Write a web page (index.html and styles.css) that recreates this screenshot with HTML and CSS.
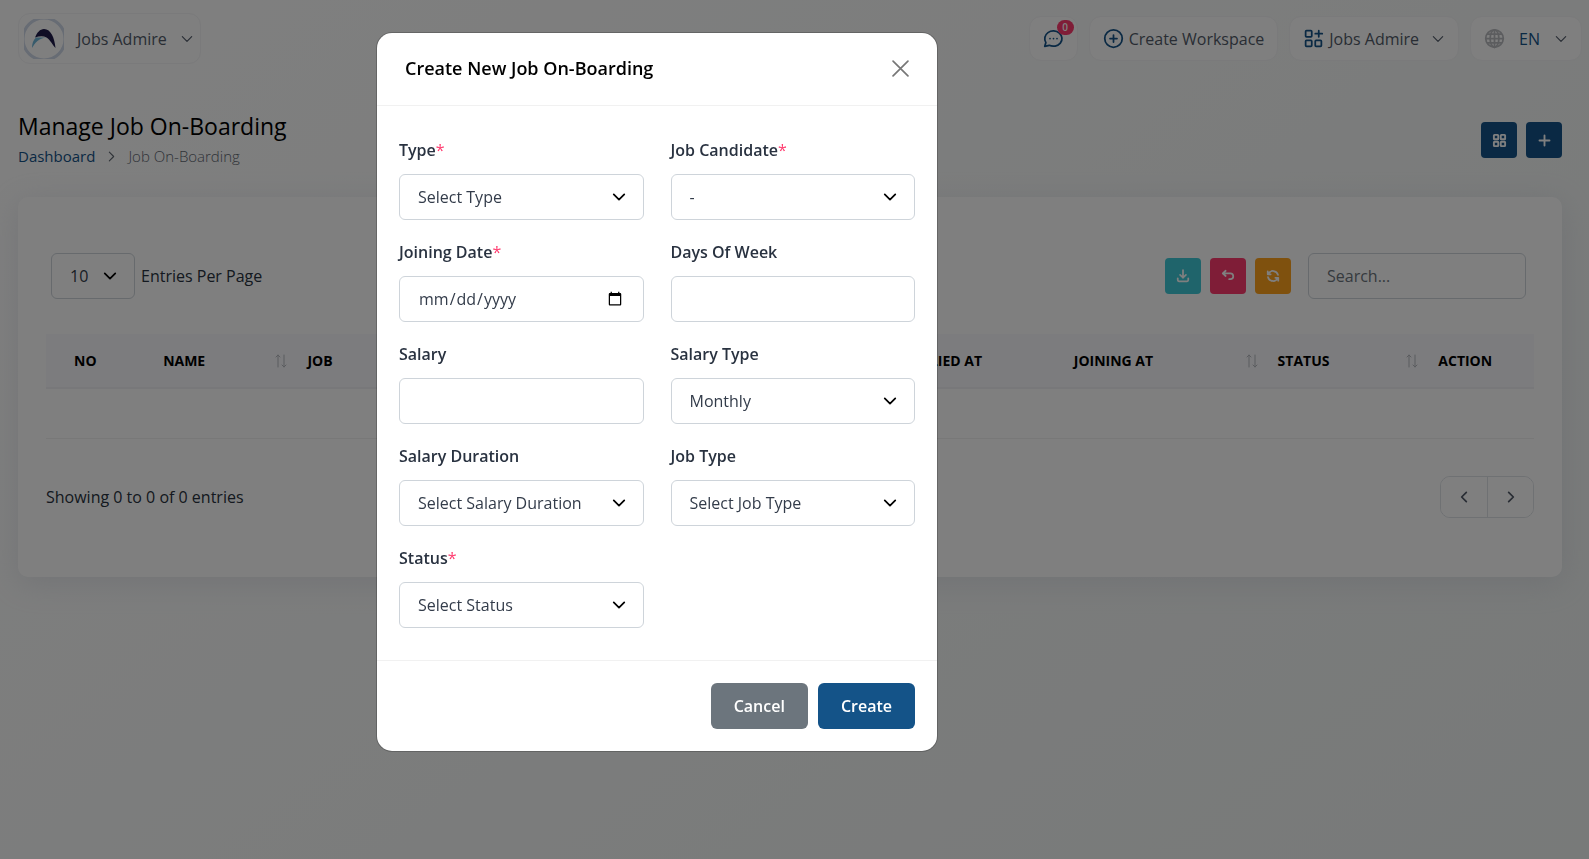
FILE: index.html
```html
<!DOCTYPE html>
<html lang="en">
<head>
<meta charset="utf-8">
<meta name="viewport" content="width=device-width, initial-scale=1">
<title>Manage Job On-Boarding</title>
<link rel="stylesheet" href="styles.css">
</head>
<body>
<svg class="defs" aria-hidden="true">
  <symbol id="chev" viewBox="0 0 24 24"><path d="M4 8l8 8 8-8"/></symbol>
  <symbol id="sort" viewBox="0 0 12 14"><path d="M3 13V1M1 3l2-2 2 2M9 1v12M7 11l2 2 2-2"/></symbol>
</svg>

<header class="topbar">
  <button class="pill profile" type="button">
    <svg class="avatar" viewBox="0 0 40 40">
      <circle cx="20" cy="20" r="21" fill="#fff" stroke="#cfd8e8" stroke-width="3"/>
      <path d="M8 29c0-4 1-8 4-10.500h10C15 19 11 24 8 29z" fill="#6fb6d8"/>
      <path d="M11 18.500c2-5 5-8.500 9-8.500 7 0 10.500 9 11.500 19-3-3-5-8-9-10.500-3-1.600-7-1.500-11.500 0z" fill="#1e1a4b"/>
    </svg>
    <span>Jobs Admire</span>
    <svg class="chev"><use href="#chev"/></svg>
  </button>
  <nav class="tools">
    <button class="pill chat" type="button" aria-label="Messages">
      <svg class="ico" viewBox="0 0 24 24"><path d="M2 21l1.300-4.300C0.900 13 1.900 8 5.700 5.300c3.900-2.700 9.400-2.500 13 .600 3.500 3 4 8 1.100 11.400-2.900 3.500-8.400 4.500-12.700 2.500L2 21M12 12v.01M8 12v.01M16 12v.01"/></svg>
      <span class="badge">0</span>
    </button>
    <button class="pill" type="button">
      <svg class="ico" viewBox="0 0 24 24"><circle cx="12" cy="12" r="10"/><path d="M8 12h8M12 8v8"/></svg>
      <span>Create Workspace</span>
    </button>
    <button class="pill" type="button">
      <svg class="ico" viewBox="0 0 24 24"><rect x="3" y="3" width="7" height="7" rx="1"/><rect x="3" y="14" width="7" height="7" rx="1"/><rect x="14" y="14" width="7" height="7" rx="1"/><path d="M14 6.500h8M18 3v7"/></svg>
      <span>Jobs Admire</span>
      <svg class="chev"><use href="#chev"/></svg>
    </button>
    <button class="pill lang" type="button">
      <svg class="globe" viewBox="0 0 24 24"><circle cx="12" cy="12" r="10"/><ellipse cx="12" cy="12" rx="5" ry="10"/><path d="M2 12h20M12 2v20M4 7h16M4 17h16"/></svg>
      <span>EN</span>
      <svg class="chev"><use href="#chev"/></svg>
    </button>
  </nav>
</header>

<main class="page">
  <div class="page-head">
    <div>
      <h1>Manage Job On-Boarding</h1>
      <nav class="crumbs">
        <a href="#">Dashboard</a>
        <svg class="crumb-sep"><use href="#chev"/></svg>
        <span>Job On-Boarding</span>
      </nav>
    </div>
    <div class="head-actions">
      <button class="sq-btn" type="button" aria-label="Grid view"><svg viewBox="0 0 24 24"><rect x="3" y="3" width="7" height="7" rx="1"/><rect x="14" y="3" width="7" height="7" rx="1"/><rect x="3" y="14" width="7" height="7" rx="1"/><rect x="14" y="14" width="7" height="7" rx="1"/></svg></button>
      <button class="sq-btn" type="button" aria-label="Create"><svg viewBox="0 0 24 24"><path d="M12 4v16M4 12h16"/></svg></button>
    </div>
  </div>

  <section class="card">
    <div class="toolbar">
      <div class="entries">
        <select id="per" class="control"><option>10</option></select>
        <label for="per">Entries Per Page</label>
      </div>
      <div class="filters">
        <button class="sq-btn teal" type="button" aria-label="Export"><svg viewBox="0 0 24 24"><path d="M3 16v3a2 2 0 0 0 2 2h14a2 2 0 0 0 2-2v-3M7 10l5 5 5-5M12 2v13"/></svg></button>
        <button class="sq-btn pink" type="button" aria-label="Reset"><svg viewBox="0 0 24 24"><path d="M8 12L3 7.500 8 3M3 7.500h13a5 5 0 0 1 0 10h-2"/></svg></button>
        <button class="sq-btn amber" type="button" aria-label="Reload"><svg viewBox="0 0 24 24"><path d="M20.500 10A9 9 0 0 0 4 8M3 4v5h5M3.500 14A9 9 0 0 0 20 16M21 20v-5h-5"/></svg></button>
        <input class="control search" type="search" placeholder="Search..." aria-label="Search">
      </div>
    </div>
    <table>
      <colgroup><col class="c-no"><col class="c-name"><col class="c-job"><col class="c-app"><col class="c-join"><col class="c-stat"><col class="c-act"></colgroup>
      <thead>
        <tr>
          <th>No</th>
          <th><span class="th">Name <svg><use href="#sort"/></svg></span></th>
          <th>Job</th>
          <th>Applied At</th>
          <th><span class="th">Joining At <svg><use href="#sort"/></svg></span></th>
          <th><span class="th">Status <svg><use href="#sort"/></svg></span></th>
          <th>Action</th>
        </tr>
      </thead>
      <tbody><tr><td colspan="7"></td></tr></tbody>
    </table>
    <div class="table-foot">
      <span>Showing 0 to 0 of 0 entries</span>
      <div class="pager">
        <button type="button" aria-label="Previous"><svg class="prev"><use href="#chev"/></svg></button>
        <button type="button" aria-label="Next"><svg class="next"><use href="#chev"/></svg></button>
      </div>
    </div>
  </section>
</main>

<div class="backdrop">
  <form class="modal" role="dialog" aria-labelledby="modal-title">
    <div class="modal-head">
      <h2 id="modal-title">Create New Job On-Boarding</h2>
      <button class="close" type="button" aria-label="Close"><svg viewBox="0 0 16 16"><path d="M1 1l14 14M15 1L1 15"/></svg></button>
    </div>
    <div class="modal-body">
      <div class="field"><label for="type">Type<b>*</b></label><select id="type" class="control"><option>Select Type</option></select></div>
      <div class="field"><label for="cand">Job Candidate<b>*</b></label><select id="cand" class="control"><option>-</option></select></div>
      <div class="field"><label for="join">Joining Date<b>*</b></label><input id="join" class="control" type="date"></div>
      <div class="field"><label for="days">Days Of Week</label><input id="days" class="control" type="text"></div>
      <div class="field"><label for="salary">Salary</label><input id="salary" class="control" type="text"></div>
      <div class="field"><label for="stype">Salary Type</label><select id="stype" class="control"><option>Monthly</option></select></div>
      <div class="field"><label for="dur">Salary Duration</label><select id="dur" class="control"><option>Select Salary Duration</option></select></div>
      <div class="field"><label for="jtype">Job Type</label><select id="jtype" class="control"><option>Select Job Type</option></select></div>
      <div class="field"><label for="status">Status<b>*</b></label><select id="status" class="control"><option>Select Status</option></select></div>
    </div>
    <div class="modal-foot">
      <button class="btn grey" type="button">Cancel</button>
      <button class="btn blue" type="submit">Create</button>
    </div>
  </form>
</div>
</body>
</html>
```

FILE: styles.css
```css
* { box-sizing: border-box; }
html { min-height: 100%; }
body {
  margin: 0;
  min-height: 100vh;
  font: 400 16px/24px "Open Sans", sans-serif;
  color: #293240;
  background: linear-gradient(142deg, #fff 3%, #f0f4f3 100%);
}
button, input, select { font: inherit; color: inherit; }
button { cursor: pointer; }
svg { fill: none; stroke: currentColor; stroke-width: 2; stroke-linecap: round; stroke-linejoin: round; flex: none; }
.defs { position: absolute; width: 0; height: 0; }

/* Top bar */
.topbar { display: flex; justify-content: space-between; align-items: center; padding: 13px 7px 0 18px; }
.tools { display: flex; gap: 11px; }
.pill {
  display: flex; align-items: center; gap: 5px;
  height: 45px; padding: 0 13px;
  background: #fff; border: 1px solid #f4f4f6; border-radius: 12px;
  color: #525b69;
}
.profile { height: 51px; padding: 0 6px 0 5px; gap: 13px; background: transparent; }
.avatar { width: 40px; height: 40px; stroke: none; }
.chev { width: 14px; height: 14px; }
.tools .chev { margin-left: 7px; }
.ico { width: 21px; height: 21px; color: #145388; }
.chat { position: relative; }
.badge {
  position: absolute; top: 3px; right: 3px;
  width: 17px; height: 15px; border-radius: 8px;
  background: #ff3a6e; color: #fff; font-size: 10px; font-weight: 600; line-height: 15px;
}
.lang { color: #145388; gap: 14px; }
.tools .lang .chev { margin-left: 0; color: #525b69; }
.globe { width: 21px; height: 21px; color: #b9bbbf; }

/* Page heading */
.page { padding: 46px 27px 0 18px; }
.page-head { display: flex; justify-content: space-between; align-items: center; margin-bottom: 27px; }
h1 { margin: 0; font-size: 23px; font-weight: 400; line-height: 32px; color: #000; }
.crumbs { display: flex; align-items: center; gap: 10px; font-size: 15px; line-height: 28px; font-weight: 300; color: #5f6771; }
.crumbs a { color: #145388; text-decoration: none; font-weight: 400; }
.crumb-sep { width: 13px; height: 13px; transform: rotate(-90deg); }
.head-actions { display: flex; gap: 9px; }
.sq-btn {
  display: grid; place-items: center;
  width: 36px; height: 36px; padding: 0;
  border: 0; border-radius: 4px; background: #145388; color: #fff;
}
.sq-btn svg { width: 15px; height: 15px; stroke-width: 3; }
.teal { background: #3ec9d6; }
.pink { background: #ff3a6e; }
.amber { background: #ffa21d; }
.filters .sq-btn svg { width: 14px; height: 14px; }

/* Card */
.card {
  padding: 56px 28px 59px;
  background: #fff; border-radius: 10px;
  box-shadow: 0 6px 30px rgba(182, 186, 203, 0.3);
}
.toolbar { display: flex; justify-content: space-between; padding: 0 8px 0 5px; margin-bottom: 35px; }
.entries, .filters { display: flex; align-items: center; }
.entries { gap: 6px; }
.filters { gap: 9px; }
.control {
  height: 46px; padding: 0 18px;
  border: 1px solid #ced4da; border-radius: 6px; background-color: #fff;
  color: #333c4a;
  appearance: none; outline: 0;
}
select.control {
  background-image: url("data:image/svg+xml,%3Csvg xmlns='http://www.w3.org/2000/svg' viewBox='0 0 16 16'%3E%3Cpath fill='none' stroke='%23000' stroke-width='2' stroke-linecap='round' stroke-linejoin='round' d='M2 5l6 6 6-6'/%3E%3C/svg%3E");
  background-repeat: no-repeat; background-position: right 17px center; background-size: 14px 14px;
}
.entries .control { width: 84px; }
.search { width: 218px; margin-left: 8px; }
.search::placeholder { color: #6c757d; }

table { width: 100%; border-collapse: collapse; table-layout: fixed; }
.c-no { width: 7.2%; }
.c-name { width: 9.7%; }
.c-job { width: 40%; }
.c-app { width: 11.5%; }
.c-join { width: 13.7%; }
.c-stat { width: 10.8%; }
th {
  height: 54px; padding: 0 10px; text-align: left; white-space: nowrap;
  font-size: 14px; font-weight: 700; text-transform: uppercase; color: #000;
  background: #f8f9fd; border-bottom: 2px solid #f1f1f4;
}
th:first-child { padding-left: 28px; }
.th { display: flex; justify-content: space-between; align-items: center; }
.th svg { width: 12px; height: 14px; stroke-width: 1; color: #b6b9be; }
td { height: 50px; border-bottom: 1px solid #f1f1f1; }

.table-foot { display: flex; justify-content: space-between; align-items: center; margin-top: 37px; }
.pager { display: flex; border: 1px solid #dee2e6; border-radius: 10px; overflow: hidden; }
.pager button { display: grid; place-items: center; width: 46px; height: 40px; padding: 0; border: 0; background: #fff; }
.pager button + button { border-left: 1px solid #dee2e6; }
.pager svg { width: 14px; height: 14px; stroke-width: 3; color: #525b69; }
.prev { transform: rotate(90deg); }
.next { transform: rotate(-90deg); }

/* Modal */
.backdrop {
  position: fixed; inset: 0; overflow: auto;
  display: flex; justify-content: center; align-items: flex-start;
  padding: 33px 275px 33px 0;
  background: rgba(0, 0, 0, 0.5);
}
.modal {
  width: 100%; max-width: 560px;
  background: #fff; border-radius: 15px; box-shadow: 0 0 0 1px rgba(0, 0, 0, 0.2);
}
.modal-head { display: flex; justify-content: space-between; align-items: center; padding: 23px 28px 25px; border-bottom: 1px solid #f1f1f1; }
h2 { margin: 0; font-size: 18px; font-weight: 600; line-height: 24px; color: #000; }
.close { display: grid; padding: 0; border: 0; background: none; color: #777; }
.close svg { width: 17px; height: 17px; stroke-width: 1.6; }
.modal-body { display: grid; grid-template-columns: 1fr 1fr; gap: 20px 27px; padding: 32px 22px; }
.field { display: flex; flex-direction: column; gap: 12px; }
.field label { font-weight: 600; }
.field b { font-weight: 400; color: #ff3a6e; }
.field .control { width: 100%; }
.modal-foot { display: flex; justify-content: flex-end; align-items: center; gap: 10px; padding: 22px; border-top: 1px solid #f1f1f1; }
.btn { padding: 11px 23px; border: 0; border-radius: 6px; color: #fff; font-weight: 600; }
.grey { background: #6c757d; }
.blue { background: #145388; }
```
